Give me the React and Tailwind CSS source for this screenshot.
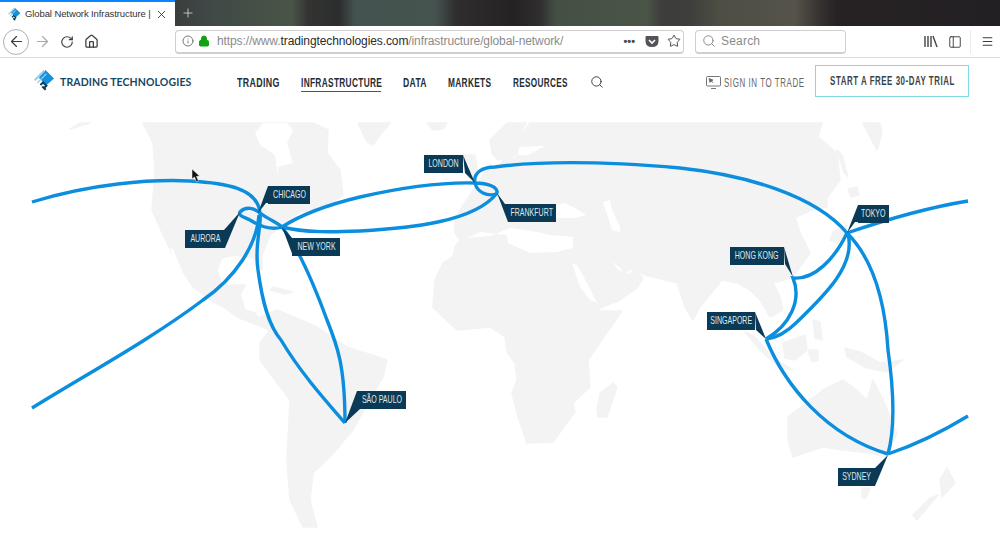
import { ArrowLeft, ArrowRight, RotateCw, House, Info, Lock, Star, Search, Menu, X, Plus, PanelLeft } from "lucide-react";

const land = [
  // north america
  "143,123 153,143 155,170 152,210 160,228 167,243 177,263 193,287 210,300 225,308 237,317 250,322 258,318 255,313 245,310 240,295 245,285 235,285 222,285 217,270 222,258 235,255 253,258 262,270 262,255 270,235 283,225 300,212 325,208 343,195 340,170 327,153 328,130 313,123",
  "70,129 90,123 80,123",
  "273,287 293,292 285,294 270,290",
  // south america
  "250,322 258,318 277,310 317,327 347,347 387,360 383,377 353,430 330,457 313,473 310,500 317,527 303,527 290,500 287,460 290,400 260,360 260,343 270,330",
  // greenland, iceland
  "358,123 390,123 380,135 373,145 367,142",
  "427,123 447,123 443,129 433,130",
  // eurasia + africa
  "530,123 822,123 818,137 837,153 840,180 827,198 827,207 813,210 795,217 800,233 810,253 793,277 773,283 780,297 783,310 770,317 760,300 750,290 738,283 722,280 700,307 693,320 685,307 677,283 645,275 633,268 625,272 607,255 612,262 617,270 630,275 634,268 643,278 637,288 620,300 598,309 600,311 622,311 603,338 588,360 590,387 573,403 575,412 567,423 553,442 527,443 518,417 512,393 517,380 515,363 507,352 505,337 490,327 457,330 443,317 433,307 435,280 443,263 453,257 455,247 460,240 455,233 455,218 470,195 485,172 500,165 503,160 518,157 519,138",
  // scandinavia, uk
  "507,123 526,123 518,138 517,155 505,158 498,160 492,153 490,140",
  "463,155 475,155 478,175 468,178 470,165",
  // japan, kamchatka, sakhalin
  "830,240 833,232 847,225 845,235 837,243",
  "848,189 857,187 859,195 851,197",
  "863,123 880,123 882,133 877,150 870,137",
  "837,150 842,155 848,177 844,172",
  // islands
  "600,393 613,383 617,387 607,417 598,417 597,410",
  "745,332 755,337 773,358 793,370 780,368 760,350",
  "783,343 805,335 807,350 795,360 785,358",
  "808,350 818,350 818,360 812,362",
  "845,348 860,352 880,363 903,360 887,372 867,368 847,357",
  "813,320 820,322 822,340 815,338",
  // australia
  "788,417 823,390 843,380 853,387 867,400 873,380 883,400 897,433 887,457 870,453 843,450 823,447 793,457 788,440",
  "862,488 870,488 866,498 862,498",
  "947,468 955,483 942,497 940,480",
  "938,495 917,520 913,515 930,498",
];

const water = [
  "255,133 263,123 287,123 293,130 287,143 293,163 278,167 278,177 275,155 260,145",
  "170,248 173,249 183,273 176,266",
  "467,238 480,232 507,235 508,243 530,253 557,252 573,248 573,237 550,235 537,232 510,228 490,236",
  "572,263 577,265 587,283 597,303 590,300 580,287",
  "603,202 610,200 612,210 620,227 620,232 612,230 608,217",
  "556,205 565,203 575,208 586,215 575,218 556,218",
  "519,147 545,146 528,155 518,155",
];

const routes = [
  "M32 202 C 90 184, 150 179, 190 181 C 225 183, 258 188, 260 213 C 262 225, 254 245, 258 270 C 262 300, 268 325, 281 340 C 300 372, 325 400, 345 423",
  "M32 408 C 85 375, 150 340, 203 300 C 235 278, 257 245, 259 215",
  "M240 212 C 246 206, 254 208, 260 213 C 268 219, 278 223, 282 227 C 270 231, 258 225, 250 220 C 244 217, 238 216, 240 212 Z",
  "M282 227 C 300 250, 316 290, 327 320 C 337 345, 345 365, 345 423",
  "M282 227 C 305 233, 335 232, 360 231 C 410 228, 475 222, 497 193 C 498 187, 488 183, 475 183 C 440 182, 395 189, 360 197 C 335 203, 305 212, 282 227 Z",
  "M497 194 C 487 197, 477 192, 475 183 C 473 173, 482 167, 495 167 C 540 161, 600 161, 680 168 C 745 175, 815 195, 847 233",
  "M847 233 C 885 220, 925 208, 968 201",
  "M847 233 C 835 258, 815 280, 793 278 C 802 300, 790 325, 766 339",
  "M848 234 C 856 265, 825 295, 797 322 C 786 333, 776 338, 766 339",
  "M847 233 C 872 258, 885 300, 888 350 C 893 385, 896 425, 888 454",
  "M766 339 C 785 385, 825 435, 888 454",
  "M888 454 C 915 445, 945 430, 968 416",
];

const labels = [
  { name: "CHICAGO", box: "left-[268px] top-[81px] w-[42px] h-[18px]", pts: "268,186 277,203 266,203 258,213" },
  { name: "AURORA", box: "left-[185px] top-[125px] w-[40px] h-[18px]", pts: "224,230 240,212 225,248" },
  { name: "NEW YORK", box: "left-[292px] top-[133px] w-[48px] h-[18px]", pts: "282,227 292,238 298,238 293,256" },
  { name: "LONDON", box: "left-[424px] top-[50px] w-[39px] h-[18px]", pts: "463,155 475,183 465,173" },
  { name: "FRANKFURT", box: "left-[508px] top-[99px] w-[48px] h-[18px]", pts: "497,193 505,204 512,204 508,222" },
  { name: "TOKYO", box: "left-[858px] top-[100px] w-[31px] h-[18px]", pts: "858,205 868,222 855,222 847,233" },
  { name: "HONG KONG", box: "left-[730px] top-[142px] w-[54px] h-[18px]", pts: "784,247 793,277 785,264" },
  { name: "SINGAPORE", box: "left-[707px] top-[207px] w-[48px] h-[18px]", pts: "755,312 766,339 756,330" },
  { name: "SÃO PAULO", box: "left-[357px] top-[286px] w-[49px] h-[18px]", pts: "357,391 345,423 360,409" },
  { name: "SYDNEY", box: "left-[838px] top-[363px] w-[37px] h-[18px]", pts: "875,468 888,455 875,486" },
];

function Logo({ className }) {
  return (
    <svg viewBox="0 0 22 22" className={className}>
      <polygon points="12,0 21,9 13,16 5,8" fill="#1590dc" />
      <polygon points="0,10 10,0 11.5,1.5 1.5,11.5" fill="#8fd0ea" />
      <polygon points="3,13 12.5,3.5 13.5,4.5 4,14" fill="#8fd0ea" />
      <polygon points="6,15 9.5,11.5 14.5,16.5 11,20 9.5,18.5 11.5,16.5 9.5,14.5 7.5,16.5" fill="#0d3b57" />
      <polygon points="8,18 9.5,16.5 13,20 11.5,21.5" fill="#0d3b57" />
    </svg>
  );
}

function Toolbar() {
  return (
    <div className="h-[32px] bg-white border-b border-[#dcdcdc] flex items-center text-[#3d3d3d]">
      <div className="w-[26px] h-[26px] ml-[3px] rounded-full border border-[#b0b0b0] flex items-center justify-center shrink-0">
        <ArrowLeft size={17} strokeWidth={1.7} />
      </div>
      <ArrowRight size={17} strokeWidth={1.7} className="ml-[5px] text-[#a9a9a9] shrink-0" />
      <RotateCw size={14} strokeWidth={2} className="ml-[9px] shrink-0" />
      <House size={15} strokeWidth={2} className="ml-[10px] shrink-0" />
      <div className="ml-[76px] w-[509px] h-[24px] shrink-0 rounded-[4px] border border-[#cfcfcf] border-b-2 flex items-center font-['Liberation_Sans',sans-serif] text-[12px] tracking-[-0.1px] text-[#8a8a8a]">
        <Info size={12} strokeWidth={1.6} className="ml-[6px] text-[#555]" />
        <Lock size={12} fill="#12a112" strokeWidth={2} className="ml-[4px] text-[#12a112]" />
        <span className="ml-[7px] whitespace-nowrap">
          https://www.<span className="text-[#2a2a2a]">tradingtechnologies.com</span>/infrastructure/global-network/
        </span>
        <div className="ml-auto mr-[1px] flex items-center text-[#4a4a4a]">
          <span className="text-[11px] font-bold tracking-[0px] leading-none">•••</span>
          <svg viewBox="0 0 14 13" className="ml-[10px] w-[14px] h-[13px]">
            <path d="M1.5 1 H12.5 Q13.5 1 13.5 2 V6 Q13.5 12 7 12 Q0.5 12 0.5 6 V2 Q0.5 1 1.5 1 Z" fill="#55525a" />
            <path d="M4 5 L7 8 L10 5" fill="none" stroke="#fff" strokeWidth="1.6" />
          </svg>
          <Star size={14} strokeWidth={1.7} className="ml-[8px] mr-[1px]" />
        </div>
      </div>
      <div className="ml-[11px] w-[151px] h-[24px] shrink-0 rounded-[4px] border border-[#cfcfcf] border-b-2 flex items-center gap-[5px] pl-[6px] font-['Liberation_Sans',sans-serif] text-[12px] tracking-[0.2px] text-[#8a8a8a]">
        <Search size={14} strokeWidth={1.7} />
        Search
      </div>
      <svg viewBox="0 0 14 13" className="ml-[78px] w-[14px] h-[13px] shrink-0" fill="none" stroke="#444" strokeWidth="1.4">
        <path d="M1 1 V12 M4 1 V12 M7 1 V12 M9 1 L13 12" />
      </svg>
      <PanelLeft size={14} strokeWidth={1.6} className="ml-[10px] shrink-0" />
      <div className="ml-[8px] w-px h-[24px] bg-[#ececec] shrink-0" />
      <Menu size={13} strokeWidth={2} className="ml-[10px] shrink-0" />
    </div>
  );
}

function SiteHeader() {
  return (
    <div className="h-[47px] bg-white flex items-start text-[#232d33] font-['Liberation_Sans',sans-serif]">
      <Logo className="ml-[34px] mt-[12px] w-[21px] h-[21px] shrink-0" />
      <div className="ml-[5px] mt-[17px] w-[177px] shrink-0 font-['Lato',sans-serif] font-bold text-[10.5px] text-[#15485f] tracking-[0.1px] whitespace-nowrap">TRADING TECHNOLOGIES</div>
      <nav className="mt-[17px] flex gap-[22px] font-bold text-[13px] leading-[16px] tracking-[0.5px] whitespace-nowrap">
        <span className="w-[42px]"><span className="block origin-left scale-x-[.68]">TRADING</span></span>
        <span className="w-[80px] border-b border-[#555]"><span className="block origin-left scale-x-[.64]">INFRASTRUCTURE</span></span>
        <span className="w-[23px]"><span className="block origin-left scale-x-[.66]">DATA</span></span>
        <span className="w-[43px]"><span className="block origin-left scale-x-[.64]">MARKETS</span></span>
        <span className="w-[54px]"><span className="block origin-left scale-x-[.63]">RESOURCES</span></span>
      </nav>
      <Search size={14} strokeWidth={1.5} className="ml-[23px] mt-[17px] shrink-0" />
      <svg viewBox="0 0 15 13" className="ml-[102px] mt-[18px] w-[15px] h-[13px] shrink-0" fill="none" stroke="#777" strokeWidth="1">
        <rect x="0.5" y="0.5" width="14" height="9.500" rx="1" />
        <path d="M5 12.500 H10" />
        <path d="M3 2.500 L7 4 L5.500 5 L7 7 M3 2.500 L4 6.500 L5.500 5" fill="#555" stroke="#555" strokeWidth="0.6" />
      </svg>
      <span className="w-[80px] ml-[3px] mt-[17px] text-[12.5px] leading-[16px] tracking-[0.9px] text-[#666] whitespace-nowrap"><span className="block origin-left scale-x-[.635]">SIGN IN TO TRADE</span></span>
      <div className="ml-[11px] mt-[7px] w-[154px] h-[32px] shrink-0 border border-[#7ddbe6] flex items-center justify-center font-bold text-[12px] tracking-[0.8px] text-[#3c4348] whitespace-nowrap">
        <span className="scale-x-[.66]">START A FREE 30-DAY TRIAL</span>
      </div>
    </div>
  );
}

function WorldMap() {
  return (
    <div className="relative flex-1 bg-white overflow-hidden">
      <svg viewBox="0 105 1000 431" className="block w-[1000px] h-[431px]">
        {land.map((p, i) => <polygon key={i} points={p} fill="#f3f3f3" stroke="#f3f3f3" strokeWidth="1.5" strokeLinejoin="round" />)}
        {water.map((p, i) => <polygon key={i} points={p} fill="#fff" />)}
        {routes.map((d, i) => <path key={i} d={d} fill="none" stroke="#0b8ede" strokeWidth="3.4" />)}
        {labels.map((l) => <polygon key={l.name} points={l.pts} fill="#0a3a55" />)}
        <path d="M192 169 V179 L194.500 177 L196.500 182 L198.500 181 L196.500 176.500 L199.500 176 Z" fill="#111" stroke="#fff" strokeWidth="0.5" />
      </svg>
      {labels.map((l) => (
        <div key={l.name} className={`absolute ${l.box} bg-[#0a3a55] flex items-center justify-center font-['Liberation_Sans',sans-serif] text-[10.5px] text-[#dfe9ee] whitespace-nowrap`}>
          <span className="scale-x-[.67]">{l.name}</span>
        </div>
      ))}
    </div>
  );
}

export default function App() {
  return (
    <div className="w-[1000px] h-[536px] flex flex-col overflow-hidden bg-white">
      <div className="h-[26px] flex bg-[linear-gradient(90deg,#3a3d3c_175px,#3e4745_202px,#4a5548_292px,#333332_308px,#2c2d2e_339px,#44534f_355px,#465350_435px,#2f2d2e_456px,#252224_514px,#302e2f_540px,#455045_556px,#4a5548_646px,#3d3d3c_662px,#3d3f3c_689px,#4e4e44_720px,#55534a_795px,#36302f_821px,#262224_837px,#232023_1000px)]">
        <div className="w-[175px] bg-white border-t-2 border-[#0a84ff] flex items-center pl-[8px] font-['Liberation_Sans',sans-serif] text-[9.5px] tracking-[-0.1px] text-[#333]">
          <Logo className="w-[13px] h-[13px] shrink-0" />
          <span className="ml-[4px] w-[131px] whitespace-nowrap">Global Network Infrastructure |</span>
          <X size={13} strokeWidth={1.6} className="ml-[-1px] shrink-0" />
        </div>
        <Plus size={14} strokeWidth={1.5} className="ml-[6px] mt-[6px] text-[#d0d0d0]" />
      </div>
      <Toolbar />
      <SiteHeader />
      <WorldMap />
    </div>
  );
}
